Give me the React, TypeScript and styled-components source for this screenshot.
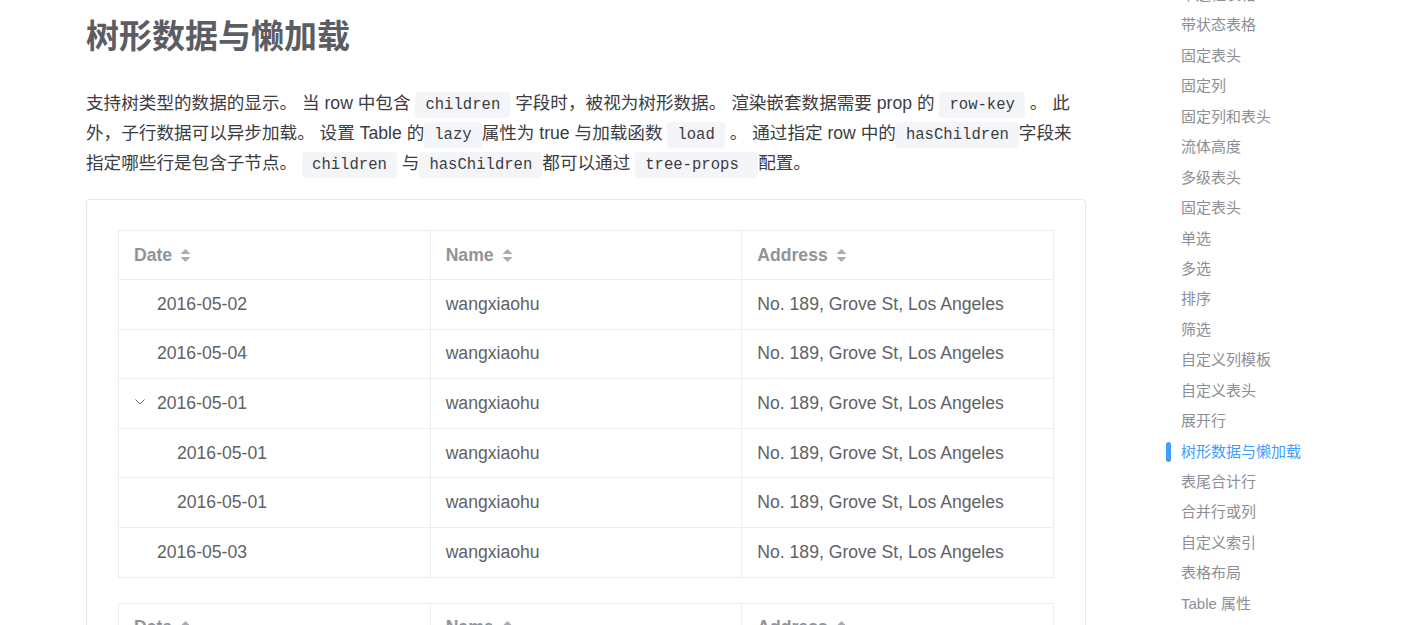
import React from "react";
import styled, { createGlobalStyle } from "styled-components";

const Global = createGlobalStyle`
  html, body { margin: 0; padding: 0; overflow: hidden; background: #fff; }
  body { font-family: "Liberation Sans", "Noto Sans CJK SC", sans-serif; }
  * { box-sizing: border-box; }
`;

const Page = styled.div`
  display: flex;
  width: 1414px;
  height: 625px;
  overflow: hidden;
`;

const Main = styled.main`
  width: 1000px;
  margin-left: 86px;
  flex: none;
`;

const Title = styled.h2`
  margin: 17px 0 0;
  font-size: 33px;
  line-height: 40px;
  font-weight: 700;
  color: #5c5d62;
  font-family: "Liberation Sans", "Noto Sans CJK SC", sans-serif;
`;

const Para = styled.p`
  margin: 31px 0 0;
  font-size: 17.6px;
  line-height: 30px;
  color: #3c3c43;
  font-family: "Liberation Sans", "Noto Sans CJK SC", sans-serif;
`;

const Code = styled.code`
  font-family: "Liberation Mono", "DejaVu Sans Mono", monospace;
  font-size: 15.6px;
  line-height: 18px;
  background: #f4f5f8;
  color: #3c3c43;
  border-radius: 4px;
  padding: 4px 10px;
`;

const Demo = styled.section`
  margin-top: 21px;
  border: 1px solid #e4e7ed;
  border-radius: 4px;
  padding: 30px 31px 0 31px;
  display: flex;
  flex-direction: column;
  gap: 25px;
  height: 700px;
`;

const Table = styled.table`
  width: 936px;
  border-collapse: collapse;
  table-layout: fixed;
  font-family: "Liberation Sans", Arial, sans-serif;
  font-size: 17.6px;
  color: #606266;
`;

const Th = styled.th`
  height: 49px;
  border: 1px solid #ebeef5;
  text-align: left;
  padding: 0 15px;
  font-weight: 700;
  color: #909399;
`;

const Td = styled.td<{ $indent?: number }>`
  height: 49.6px;
  border: 1px solid #ebeef5;
  padding: 0 15px 0 ${(p) => 15 + (p.$indent ?? 0)}px;
`;

const HeadCell = styled.span`
  display: inline-flex;
  align-items: center;
  gap: 8px;
`;

const Caret = styled.svg`
  width: 11px;
  height: 15px;
  flex: none;
`;

const Expand = styled.svg`
  width: 10px;
  height: 6px;
  margin: 0 12px 0 1px;
  vertical-align: middle;
  position: relative;
  top: -2px;
`;

const Aside = styled.aside`
  margin-left: 80px;
  width: 200px;
  flex: none;
`;

const NavList = styled.ul`
  list-style: none;
  margin: -20px 0 0;
  padding: 0;
`;

const NavItem = styled.li<{ $active?: boolean }>`
  position: relative;
  line-height: 30.45px;
  height: 30.45px;
  padding-left: 15px;
  font-size: 15px;
  font-family: "Liberation Sans", "Noto Sans CJK SC", sans-serif;
  color: ${(p) => (p.$active ? "#409eff" : "#8d8f94")};
  white-space: nowrap;
  ${(p) =>
    p.$active &&
    `&::before {
      content: "";
      position: absolute;
      left: 0;
      top: 5px;
      width: 5px;
      height: 20px;
      border-radius: 3px;
      background: #409eff;
    }`}
`;

const SortIcon = () => (
  <Caret viewBox="0 0 11 15">
    <path d="M5.5 1 L10.5 6 H0.5 Z" fill="#a8abb2" />
    <path d="M5.5 14 L10.5 9 H0.5 Z" fill="#a8abb2" />
  </Caret>
);

const ChevronDown = () => (
  <Expand viewBox="0 0 10 6">
    <path d="M0.5 0.5 L5 5 L9.5 0.5" fill="none" stroke="#606266" strokeWidth="1" />
  </Expand>
);

type Row = { date: string; level: number; expand?: boolean };

const rows: Row[] = [
  { date: "2016-05-02", level: 0 },
  { date: "2016-05-04", level: 0 },
  { date: "2016-05-01", level: 0, expand: true },
  { date: "2016-05-01", level: 1 },
  { date: "2016-05-01", level: 1 },
  { date: "2016-05-03", level: 0 },
];

const Header = () => (
  <thead>
    <tr>
      <Th>
        <HeadCell>
          Date <SortIcon />
        </HeadCell>
      </Th>
      <Th>
        <HeadCell>
          Name <SortIcon />
        </HeadCell>
      </Th>
      <Th>
        <HeadCell>
          Address <SortIcon />
        </HeadCell>
      </Th>
    </tr>
  </thead>
);

const nav = [
  "带边框表格",
  "带状态表格",
  "固定表头",
  "固定列",
  "固定列和表头",
  "流体高度",
  "多级表头",
  "固定表头",
  "单选",
  "多选",
  "排序",
  "筛选",
  "自定义列模板",
  "自定义表头",
  "展开行",
  "树形数据与懒加载",
  "表尾合计行",
  "合并行或列",
  "自定义索引",
  "表格布局",
  "Table 属性",
];

export default function App() {
  return (
    <>
      <Global />
      <Page>
        <Main>
          <Title>树形数据与懒加载</Title>
          <Para>
            支持树类型的数据的显示。 当 row 中包含 <Code>children</Code> 字段时，被视为树形数据。 渲染嵌套数据需要 prop 的{" "}
            <Code>row-key</Code> 。 此外，子行数据可以异步加载。 设置 Table 的<Code>lazy</Code>属性为 true 与加载函数{" "}
            <Code>load</Code> 。 通过指定 row 中的<Code>hasChildren</Code>字段来指定哪些行是包含子节点。{" "}
            <Code>children</Code> 与<Code>hasChildren</Code>都可以通过 <Code>tree-props </Code>配置。
          </Para>
          <Demo>
            <Table>
              <Header />
              <tbody>
                {rows.map((r, i) => (
                  <tr key={i}>
                    <Td $indent={r.expand ? 0 : 23 + r.level * 20}>
                      {r.expand && <ChevronDown />}
                      {r.date}
                    </Td>
                    <Td>wangxiaohu</Td>
                    <Td>No. 189, Grove St, Los Angeles</Td>
                  </tr>
                ))}
              </tbody>
            </Table>
            <Table>
              <Header />
            </Table>
          </Demo>
        </Main>
        <Aside>
          <NavList>
            {nav.map((n, i) => (
              <NavItem key={i} $active={n === "树形数据与懒加载"}>
                {n}
              </NavItem>
            ))}
          </NavList>
        </Aside>
      </Page>
    </>
  );
}
